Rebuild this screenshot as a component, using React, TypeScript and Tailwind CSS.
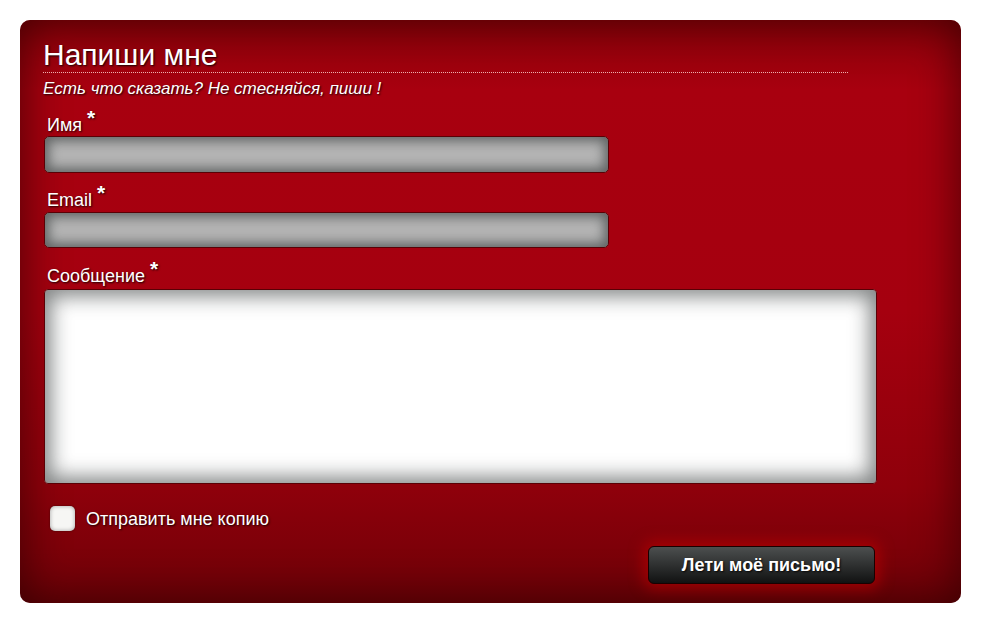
import React from "react";

export default function App() {
  const font = { fontFamily: '"Liberation Sans", Arial, sans-serif' };
  const ts = "[text-shadow:1px_1px_2px_rgba(0,0,0,0.85)]";
  const Label = ({ text, cls }: { text: string; cls: string }) => (
    <div className={`${cls} ml-[4px] h-[20px] flex text-[18px] leading-[20px] text-white ${ts}`}>
      <span>{text}</span>
      <span className="relative top-[-5px] ml-[5px] text-[21px] leading-[16px] font-bold">*</span>
    </div>
  );
  return (
    <div className="w-[985px] h-[626px] bg-white p-[20px]" style={font}>
      <div className="relative w-[941px] h-[583px] rounded-[10px] bg-[linear-gradient(to_bottom,#8c0009_0%,#a8000f_12%,#a5000f_50%,#8f000b_80%,#6e0007_100%)] shadow-[inset_0_0_45px_rgba(40,0,0,0.75)] pl-[23px] pt-[18px] flex flex-col overflow-hidden">
        <div className="w-[805px] border-b border-dotted border-[#f0b0b0]">
          <h1 className={`text-[30px] leading-[34px] text-white ${ts}`}>Напиши мне</h1>
        </div>
        <p className={`mt-[6px] text-[17px] leading-[20px] italic text-white ${ts}`}>
          Есть что сказать? Не стесняйся, пиши !
        </p>
        <Label text="Имя" cls="mt-[16px]" />
        <div className="mt-[1px] ml-[1px] w-[565px] h-[37px] rounded-[5px] border border-[#5a0005] bg-[#b4b4b4] shadow-[inset_0_0_12px_4px_rgba(40,45,45,0.6)]" />
        <Label text="Email" cls="mt-[17px]" />
        <div className="mt-[2px] ml-[1px] w-[565px] h-[36px] rounded-[5px] border border-[#5a0005] bg-[#b4b4b4] shadow-[inset_0_0_12px_4px_rgba(40,45,45,0.6)]" />
        <Label text="Сообщение" cls="mt-[18px]" />
        <div className="mt-[3px] ml-[1px] w-[833px] h-[195px] rounded-[4px] border border-[#5a0005] bg-white shadow-[inset_0_0_20px_6px_rgba(60,65,65,0.65)]" />
        <div className="mt-[22px] ml-[7px] flex items-center gap-[11px]">
          <div className="w-[25px] h-[25px] rounded-[5px] bg-[#f6f6f4] shadow-[inset_0_0_4px_rgba(0,0,0,0.35),0_0_2px_rgba(0,0,0,0.5)]" />
          <span className={`text-[18px] leading-[20px] text-white ${ts}`}>Отправить мне копию</span>
        </div>
        <div className="mt-[15px] ml-[605px] w-[227px] h-[38px] rounded-[6px] bg-[linear-gradient(to_bottom,#4c4f4f,#111212)] border border-[#1a0000] shadow-[0_0_14px_5px_rgba(190,0,0,0.6)] flex items-center justify-center">
          <span className={`text-[18px] font-bold text-white ${ts}`}>Лети моё письмо!</span>
        </div>
      </div>
    </div>
  );
}
